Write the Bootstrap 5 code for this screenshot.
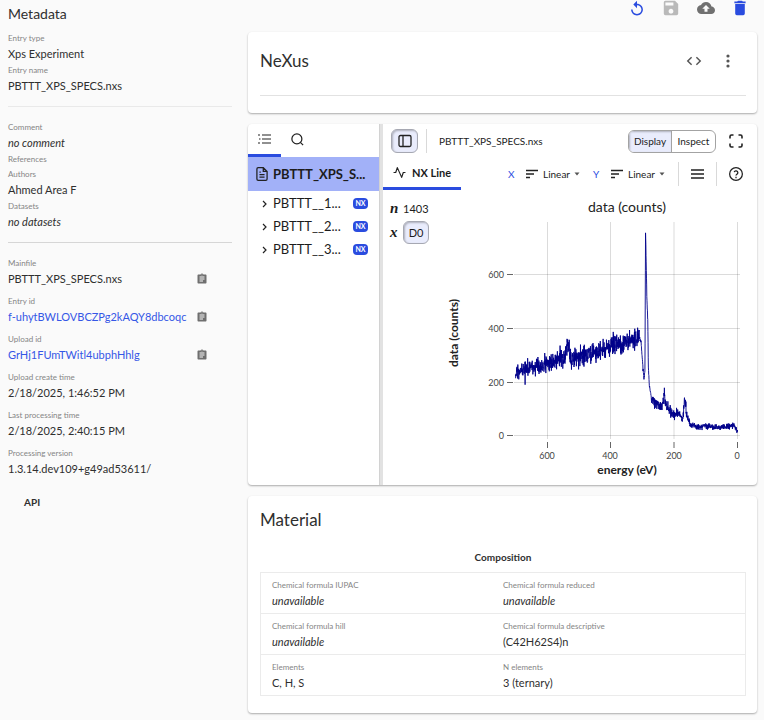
<!DOCTYPE html>
<html lang="en">
<head>
<meta charset="utf-8">
<meta name="viewport" content="width=device-width, initial-scale=1">
<title>PBTTT_XPS_SPECS.nxs</title>
<link href="https://cdn.jsdelivr.net/npm/bootstrap@5.3.0/dist/css/bootstrap.min.css" rel="stylesheet">
<style>
:root { --blue: #2a4cdf; --ink: #2f2f2f; --muted: #858585; }
body { font-family: Lato, "Open Sans", sans-serif; font-size: 11px; line-height: 17px; color: var(--ink); background: #fafafa; }
button, select { font-family: inherit; color: inherit; }
svg { display: block; flex: none; }
.plain { background: none; border: 0; padding: 0; }
.sidebar { width: 248px; padding: 2px 16px 0 8px; flex: none; }
.sidebar h1 { font-size: 14px; line-height: 24px; font-weight: 400; margin: 0 0 5px; }
dl, dd { margin: 0; }
dt { font-size: 8px; line-height: 15px; font-weight: 400; color: var(--muted); }
dd { line-height: 16px; padding-bottom: 1px; }
dd a { color: #3557e6; text-decoration: none; white-space: nowrap; }
.section-line { border: 0; height: 1px; background: #e9e9e9; opacity: 1; margin: 11px 0 13px; }
.section-line.strong { background: #d6d6d6; }
.ids { display: grid; gap: 6px; }
.copy { color: #6f6f6f; margin-right: 24px; }
.api { font-size: 10px; font-weight: 700; padding: 8px 16px; margin-top: 8px; }
.main-area { padding-right: 7px; }
.page-tools { height: 16px; padding-right: 10px; gap: 18px; margin-bottom: 16px; }
.panel { background: #fff; border-radius: 4px; box-shadow: 0 1px 2px rgba(0,0,0,.32); }
.panel h2 { font-size: 17px; line-height: 26px; font-weight: 400; margin: 0; }
.nexus { padding: 16px 11px 17px 12px; margin-bottom: 11px; }
.nexus hr { margin: 21px 0 0; border: 0; height: 1px; opacity: 1; background: #e2e2e2; }
.viewer { margin-bottom: 11px; color: #1c1c1c; overflow: hidden; }
.tree { width: 131px; flex: none; }
.tree-tabs { height: 33px; }
.tree-tabs button { width: 33px; height: 33px; border-bottom: 3px solid transparent; }
.tree-tabs button.active, .vis-tab { border-bottom: 3px solid var(--blue); }
.tree-root { width: 100%; height: 34px; background: #a2b1f8; font-weight: 700; padding: 0 8px; gap: 5px; white-space: nowrap; }
.tree-root span { font-size: 13px; }
.tree-items { padding-top: 1px; }
.tree-item { width: 100%; height: 23px; padding: 0 11px 0 14px; }
.tree-item .name { width: 86px; text-align: left; padding-left: 6px; font-size: 13px; white-space: nowrap; }
.nx { background: var(--blue); color: #fff; font-size: 7px; line-height: 11px; font-weight: 700; border-radius: 4px; text-align: center; width: 15px; flex: none; }
.splitter { width: 4px; background: #e2e2e2; border-left: 1px solid #d2d2d2; flex: none; }
.bar { height: 34px; padding: 0 14px 0 8px; font-size: 10px; }
.toggle { background: #e9ecfc; border: 1px solid #a6a8b2; border-radius: 6px; box-shadow: inset 1px 1px 2px rgba(0,0,0,.25); }
.side-toggle { width: 27px; height: 24px; }
.rule { width: 1px; height: 24px; background: #d9d9d9; }
.modes { height: 23px; border: 1px solid #a3a3a3; border-radius: 6px; overflow: hidden; margin-right: 13px; }
.modes button { width: 43px; font-size: 10px; }
.modes button.active { background: #e9ecfc; box-shadow: inset 1px 1px 2px rgba(0,0,0,.25); border-right: 1px solid #a3a3a3; }
.vis-bar { height: 32px; padding-right: 14px; font-size: 10px; }
.vis-tab { width: 78px; height: 32px; font-size: 11px; font-weight: 700; gap: 6px; }
.axis { color: var(--blue); width: 18px; font-size: 10px; }
.axis-y { margin-left: 13px; }
.scale { appearance: none; background: none; border: 0; padding: 0; width: 31px; font-size: 10px; margin-left: 5px; }
.more { margin: 0 12px; }
.dims { width: 57px; flex: none; padding: 10px 0 0 7px; font-size: 11px; }
.dims i { width: 13px; font: italic bold 15px/17px "Liberation Serif", serif; }
.dims .toggle { width: 26px; height: 23px; padding: 0; font-size: 11px; }
.chart { width: 100%; height: auto; margin-top: 2px; font-family: Lato, sans-serif; fill: #222; }
.chart .grid-line { stroke: #000; stroke-opacity: .14; }
.chart .tick { stroke: #666; }
.chart .num { font-size: 9px; fill: #444; }
.material { padding: 11px 11px 17px 12px; margin-bottom: 6px; }
.material h3 { font-size: 10px; line-height: 17px; font-weight: 700; text-align: center; margin: 16px 0 6px; }
.facts { border: 1px solid #ebebeb; border-bottom: 0; }
.facts > .row { border-bottom: 1px solid #ebebeb; padding: 5px 0 3px; }
.facts dl { padding-left: 11px; }
</style>
<script src="https://cdn.jsdelivr.net/npm/bootstrap@5.3.0/dist/js/bootstrap.bundle.min.js"></script>
</head>
<body>
<svg class="d-none" aria-hidden="true">
  <symbol id="clip" viewBox="0 0 24 24"><path fill="currentColor" d="M19 3h-4.180C14.400 1.840 13.300 1 12 1s-2.400.840-2.820 2H5c-1.100 0-2 .9-2 2v14c0 1.100.9 2 2 2h14c1.100 0 2-.9 2-2V5c0-1.100-.9-2-2-2zm-7 0c.550 0 1 .450 1 1s-.450 1-1 1-1-.450-1-1 .450-1 1-1zm2 14H7v-2h7v2zm3-4H7v-2h10v2zm0-4H7V7h10v2z"/></symbol>
  <symbol id="scale" viewBox="0 0 12 10"><path d="M0 1.500h12M0 5h8M0 8.500h4" stroke="#222" stroke-width="1.500"/></symbol>
  <symbol id="caret" viewBox="0 0 6 4"><path d="M.5.5h5L3 3.500z" fill="#555"/></symbol>
  <symbol id="chev" viewBox="0 0 5 8"><path d="M1 1l3 3-3 3" fill="none" stroke="#222" stroke-width="1.200"/></symbol>
</svg>
<div class="d-flex">
  <aside class="sidebar">
    <h1>Metadata</h1>
    <dl><dt>Entry type</dt><dd>Xps Experiment</dd><dt>Entry name</dt><dd>PBTTT_XPS_SPECS.nxs</dd></dl>
    <hr class="section-line">
    <dl><dt>Comment</dt><dd class="fst-italic">no comment</dd><dt>References</dt><dt>Authors</dt><dd>Ahmed Area F</dd><dt>Datasets</dt><dd class="fst-italic">no datasets</dd></dl>
    <hr class="section-line strong">
    <dl class="ids">
      <div><dt>Mainfile</dt><dd class="d-flex justify-content-between align-items-center">PBTTT_XPS_SPECS.nxs<button class="plain copy" aria-label="Copy mainfile"><svg width="12" height="12"><use href="#clip"/></svg></button></dd></div>
      <div><dt>Entry id</dt><dd class="d-flex justify-content-between align-items-center"><a href="#">f-uhytBWLOVBCZPg2kAQY8dbcoqc</a><button class="plain copy" aria-label="Copy entry id"><svg width="12" height="12"><use href="#clip"/></svg></button></dd></div>
      <div><dt>Upload id</dt><dd class="d-flex justify-content-between align-items-center"><a href="#">GrHj1FUmTWitl4ubphHhlg</a><button class="plain copy" aria-label="Copy upload id"><svg width="12" height="12"><use href="#clip"/></svg></button></dd></div>
      <div><dt>Upload create time</dt><dd>2/18/2025, 1:46:52 PM</dd></div>
      <div><dt>Last processing time</dt><dd>2/18/2025, 2:40:15 PM</dd></div>
      <div><dt>Processing version</dt><dd>1.3.14.dev109+g49ad53611/</dd></div>
    </dl>
    <button class="plain api">API</button>
  </aside>

  <main class="main-area flex-grow-1">
    <div class="page-tools d-flex justify-content-end align-items-center">
      <button class="plain" aria-label="Undo"><svg width="16" height="17" viewBox="4 0 16 23"><path fill="#2a4cdf" d="M12 5V1L7 6l5 5V7c3.310 0 6 2.690 6 6s-2.690 6-6 6-6-2.690-6-6H4c0 4.420 3.580 8 8 8s8-3.580 8-8-3.580-8-8-8z"/></svg></button>
      <button class="plain" aria-label="Save" disabled><svg width="16" height="16" viewBox="2 2 20 20"><path fill="#b9b9b9" d="M17 3H5c-1.110 0-2 .9-2 2v14c0 1.100.890 2 2 2h14c1.100 0 2-.9 2-2V7l-4-4zm-5 16c-1.660 0-3-1.340-3-3s1.340-3 3-3 3 1.340 3 3-1.340 3-3 3zm3-10H5V5h10v4z"/></svg></button>
      <button class="plain" aria-label="Upload"><svg width="18" height="16" viewBox="0 2 24 20"><path fill="#707070" d="M19.350 10.040C18.670 6.590 15.640 4 12 4 9.110 4 6.600 5.640 5.350 8.040 2.340 8.360 0 10.910 0 14c0 3.310 2.690 6 6 6h13c2.760 0 5-2.240 5-5 0-2.640-2.050-4.780-4.650-4.960zM14 13v4h-4v-4H7l5-5 5 5h-3z"/></svg></button>
      <button class="plain" aria-label="Delete"><svg width="14" height="16" viewBox="4 2 16 20"><path fill="#2a4cdf" d="M6 19c0 1.100.9 2 2 2h8c1.100 0 2-.9 2-2V7H6v12zM19 4h-3.500l-1-1h-5l-1 1H5v2h14V4z"/></svg></button>
    </div>

    <section class="panel nexus">
      <div class="d-flex align-items-center">
        <h2 class="me-auto">NeXus</h2>
        <button class="plain" aria-label="Show code"><svg width="16" height="16" viewBox="1 1 22 22"><path fill="#555" d="M9.400 16.600L4.800 12l4.600-4.600L8 6l-6 6 6 6 1.400-1.400zm5.200 0l4.600-4.600-4.600-4.600L16 6l6 6-6 6-1.400-1.400z"/></svg></button>
        <button class="plain ms-3 me-2" aria-label="More"><svg width="20" height="16" viewBox="0 0 20 16" fill="#555"><circle cx="10" cy="3" r="1.600"/><circle cx="10" cy="8" r="1.600"/><circle cx="10" cy="13" r="1.600"/></svg></button>
      </div>
      <hr>
    </section>

    <section class="panel viewer d-flex">
      <div class="tree">
        <div class="tree-tabs d-flex">
          <button class="plain active d-flex align-items-center justify-content-center" aria-label="Explore"><svg width="13" height="10" viewBox="0 0 13 10" stroke="#222" stroke-width="1.200"><path d="M4 1h9M4 5h9M4 9h9"/><path d="M0 1h2M1 5h1.500M0 9h2"/></svg></button>
          <button class="plain d-flex align-items-center justify-content-center" aria-label="Search"><svg width="15" height="15" viewBox="0 0 24 24" fill="none" stroke="#222" stroke-width="2"><circle cx="11" cy="11" r="8"/><path d="m21 21-4.350-4.350"/></svg></button>
        </div>
        <button class="plain tree-root d-flex align-items-center"><svg width="12" height="14" viewBox="3 1 18 22" fill="none" stroke="#222" stroke-width="2"><path d="M14 2H6a2 2 0 0 0-2 2v16a2 2 0 0 0 2 2h12a2 2 0 0 0 2-2V8zM14 2v6h6M16 13H8M16 17H8M10 9H8"/></svg><span>PBTTT_XPS_S...</span></button>
        <div class="tree-items">
          <button class="plain tree-item d-flex align-items-center"><svg width="5" height="8"><use href="#chev"/></svg><span class="name">PBTTT__1...</span><span class="nx">NX</span></button>
          <button class="plain tree-item d-flex align-items-center"><svg width="5" height="8"><use href="#chev"/></svg><span class="name">PBTTT__2...</span><span class="nx">NX</span></button>
          <button class="plain tree-item d-flex align-items-center"><svg width="5" height="8"><use href="#chev"/></svg><span class="name">PBTTT__3...</span><span class="nx">NX</span></button>
        </div>
      </div>
      <div class="splitter"></div>
      <div class="flex-grow-1">
        <div class="bar d-flex align-items-center">
          <button class="toggle side-toggle p-0 d-flex align-items-center justify-content-center" aria-label="Toggle sidebar"><svg width="14" height="14" viewBox="0 0 14 14" fill="none" stroke="#222" stroke-width="1.300"><rect x="1" y="1.500" width="12" height="11" rx="1.500"/><path d="M5 1.500v11"/></svg></button>
          <span class="rule mx-2"></span>
          <span class="ms-1 me-auto">PBTTT_XPS_SPECS.nxs</span>
          <div class="modes d-flex"><button class="plain active">Display</button><button class="plain">Inspect</button></div>
          <button class="plain" aria-label="Full screen"><svg width="14" height="14" viewBox="0 0 14 14" fill="none" stroke="#222" stroke-width="1.600"><path d="M1 4.500V2.500Q1 1 2.500 1h2M9.500 1h2Q13 1 13 2.500v2M13 9.500v2q0 1.500-1.500 1.500h-2M4.500 13h-2Q1 13 1 11.500v-2"/></svg></button>
        </div>
        <div class="vis-bar d-flex align-items-center">
          <button class="plain vis-tab me-auto d-flex align-items-center justify-content-center"><svg width="13" height="13" viewBox="0 0 24 24" fill="none" stroke="#222" stroke-width="2.200" stroke-linejoin="round"><path d="M23 12h-4l-3 9L8 3l-3 9H1"/></svg>NX Line</button>
          <label class="axis" for="xs">X</label><svg width="12" height="10"><use href="#scale"/></svg>
          <select class="scale" id="xs"><option>Linear</option></select><svg width="6" height="4"><use href="#caret"/></svg>
          <label class="axis axis-y" for="ys">Y</label><svg width="12" height="10"><use href="#scale"/></svg>
          <select class="scale" id="ys"><option>Linear</option></select><svg width="6" height="4"><use href="#caret"/></svg>
          <span class="rule axis-y"></span>
          <button class="plain more" aria-label="More controls"><svg width="13" height="10" viewBox="0 0 13 10" stroke="#222" stroke-width="1.500"><path d="M0 1h13M0 5h13M0 9h13"/></svg></button>
          <span class="rule me-2"></span>
          <button class="plain ms-1" aria-label="Help"><svg width="14" height="14" viewBox="1 1 22 22" fill="none" stroke="#222" stroke-width="2"><circle cx="12" cy="12" r="10"/><path d="M9.090 9a3 3 0 0 1 5.830 1c0 2-3 2.500-3 4.500M12 16.500v2"/></svg></button>
        </div>
        <div class="d-flex">
          <div class="dims">
            <div class="d-flex align-items-center mb-1"><i>n</i><span>1403</span></div>
            <div class="d-flex align-items-center"><i>x</i><button class="toggle">D0</button></div>
          </div>
          <svg class="chart flex-shrink-1" viewBox="440 192 317 293" role="img" aria-label="data (counts) against energy (eV)">
            <path class="grid-line" d="M547.500 222v217M610.500 222v217M674 222v217M737.500 222v217M514 274.500h226M514 328.500h226M514 382.500h226M514 435.500h226"/>
            <path class="tick" d="M507 274.500h6M507 328.500h6M507 382.500h6M507 435.500h6M547.500 442v6M610.500 442v6M674 442v6M737.500 442v6"/>
            <polyline id="trace" fill="none" stroke="#00008b" stroke-width=".9"/>
            <g class="num" text-anchor="end"><text x="504" y="278">600</text><text x="504" y="332">400</text><text x="504" y="386">200</text><text x="504" y="439">0</text></g>
            <g class="num" text-anchor="middle"><text x="547" y="459">600</text><text x="610" y="459">400</text><text x="674" y="459">200</text><text x="737" y="459">0</text></g>
            <text x="627" y="212" font-size="14" text-anchor="middle">data (counts)</text>
            <text x="627" y="474" font-size="12" font-weight="700" text-anchor="middle">energy (eV)</text>
            <text transform="translate(458 333) rotate(-90)" font-size="12" font-weight="700" text-anchor="middle">data (counts)</text>
          </svg>
        </div>
      </div>
    </section>

    <section class="panel material">
      <h2>Material</h2>
      <h3>Composition</h3>
      <div class="facts">
        <div class="row g-0"><dl class="col-6"><dt>Chemical formula IUPAC</dt><dd class="fst-italic">unavailable</dd></dl><dl class="col-6 ps-0"><dt>Chemical formula reduced</dt><dd class="fst-italic">unavailable</dd></dl></div>
        <div class="row g-0"><dl class="col-6"><dt>Chemical formula hill</dt><dd class="fst-italic">unavailable</dd></dl><dl class="col-6 ps-0"><dt>Chemical formula descriptive</dt><dd>(C42H62S4)n</dd></dl></div>
        <div class="row g-0"><dl class="col-6"><dt>Elements</dt><dd>C, H, S</dd></dl><dl class="col-6 ps-0"><dt>N elements</dt><dd>3 (ternary)</dd></dl></div>
      </div>
    </section>
  </main>
</div>
<script>
// Survey spectrum: [energy in eV, mean counts], with counting noise added
const shape = [[700,235],[640,258],[560,288],[544,290],[537,345],[534,342],[527,290],[520,290],[480,302],[400,330],[340,352],[312,372],[304,350],[298,250],[295,215],[292,240],[290,765],[288,640],[286,520],[283,430],[281,250],[278,190],[272,145],[262,122],[237,108],[231,155],[226,118],[215,95],[203,78],[185,85],[172,62],[167,150],[162,100],[158,62],[150,42],[140,36],[112,34],[106,43],[95,36],[60,32],[30,35],[16,40],[8,32],[0,15]];
let seed = 11;
const rnd = () => (seed = (seed * 16807) % 2147483647) / 2147483647;
const gauss = () => rnd() + rnd() + rnd() + rnd() + rnd() + rnd() - 3;
const pts = [];
let k = 0;
for (let i = 0; i < 1403; i++) {
  const e = 700 * (1 - i / 1402);
  while (k < shape.length - 2 && e < shape[k + 1][0]) k++;
  const [a, va] = shape[k], [b, vb] = shape[k + 1];
  const m = va + (vb - va) * (a - e) / (a - b);
  const steep = e < 310 && e > 272;
  const v = m + gauss() * 1.4 * Math.sqrt(m) * (steep ? .25 : 1);
  pts.push((737.5 - e * .317).toFixed(2) + ',' + (436 - v * .2685).toFixed(2));
}
document.getElementById('trace').setAttribute('points', pts.join(' '));
</script>
</body>
</html>
